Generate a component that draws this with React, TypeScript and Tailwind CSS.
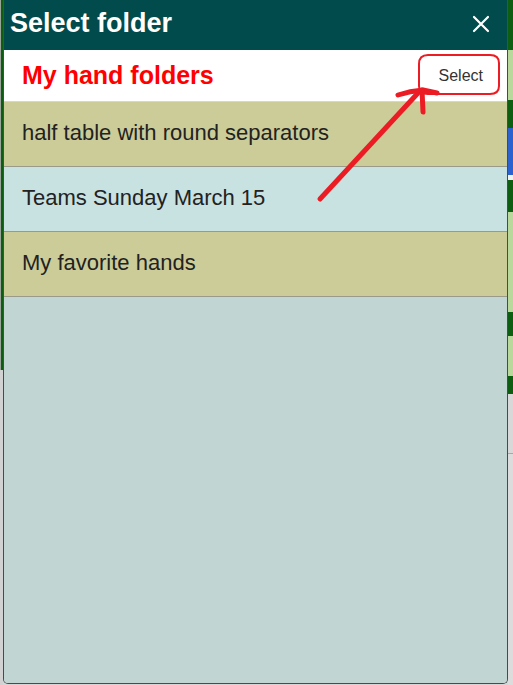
import React from "react";

const rows = [
  { label: "half table with round separators", bg: "bg-[#cccc99]" },
  { label: "Teams Sunday March 15", bg: "bg-[#c8e1e1]" },
  { label: "My favorite hands", bg: "bg-[#cccc99]" },
];

export default function App() {
  return (
    <div className="relative w-[513px] h-[685px] flex overflow-hidden bg-[#d6d6d6] font-['Liberation_Sans',Arial,sans-serif]">
      {/* left page strip */}
      <div className="w-[3px] flex flex-col">
        <div className="h-[370px] flex">
          <div className="w-[1px] bg-[#9aa59a]" />
          <div className="flex-1 bg-[#0e5e12]" />
        </div>
        <div className="flex-1 bg-[#d2d2d2]" />
      </div>

      {/* modal */}
      <div className="w-[505px] h-[684px] flex flex-col border-x border-b border-[#4a4a4a] rounded-b-[5px] overflow-hidden bg-[#c1d5d3]">
        <div className="h-[50px] bg-[#014b4c] flex items-center justify-between pl-[6px] pr-[17px] pb-[3px] shrink-0">
          <span className="text-white font-bold text-[27px]">Select folder</span>
          <svg width="18" height="18" viewBox="0 0 18 18" className="mt-[1px]">
            <path d="M2 2 L16 16 M16 2 L2 16" stroke="white" strokeWidth="2.2" strokeLinecap="round" />
          </svg>
        </div>
        <div className="h-[52px] bg-white border-b border-[#d6d6d6] flex items-center justify-between pl-[18px] pr-[24px] shrink-0">
          <span className="text-[#ff0000] font-bold text-[25px]">My hand folders</span>
          <span className="text-[#333333] text-[16px]">Select</span>
        </div>
        {rows.map((r) => (
          <div
            key={r.label}
            className={`h-[65px] ${r.bg} border-b border-[#9a9a8a] flex items-center pl-[18px] pb-[3px] shrink-0`}
          >
            <span className="text-[#222222] text-[22px]">{r.label}</span>
          </div>
        ))}
        <div className="flex-1 bg-[#c1d5d3]" />
      </div>

      {/* right page strip */}
      <div className="w-[5px] flex flex-col">
        <div className="h-[50px] bg-[#0e5e12]" />
        <div className="h-[50px] bg-[#b9d89c]" />
        <div className="h-[28px] bg-[#0e5e12]" />
        <div className="h-[47px] bg-[#2b62cf]" />
        <div className="h-[5px] bg-[#f2f2f2]" />
        <div className="h-[32px] bg-[#0e5e12]" />
        <div className="h-[100px] bg-[#b9d89c]" />
        <div className="h-[24px] bg-[#0e5e12]" />
        <div className="h-[40px] bg-[#b9d89c]" />
        <div className="h-[18px] bg-[#0e5e12]" />
        <div className="h-[60px] bg-[#d8d8d8] border-b border-[#a8a8a8]" />
        <div className="flex-1 bg-[#dcdcdc]" />
      </div>

      {/* red annotation overlay */}
      <svg className="absolute inset-0 pointer-events-none" width="513" height="685" viewBox="0 0 513 685">
        <path
          d="M428 55 Q419 55 419 64 L419 86 Q419 94 428 94 L490 94 Q499 94 499 86 L499 63 Q499 55 490 55 Z"
          fill="none"
          stroke="#ec1c24"
          strokeWidth="2"
          strokeLinejoin="round"
        />
        <path d="M320 199 L418 93" stroke="#ec1c24" strokeWidth="5" strokeLinecap="round" fill="none" />
        <path d="M398 95 Q410 91 423 90 L437 93" stroke="#ec1c24" strokeWidth="5" strokeLinecap="round" strokeLinejoin="round" fill="none" />
        <path d="M422 90 L423 112" stroke="#ec1c24" strokeWidth="5" strokeLinecap="round" fill="none" />
      </svg>
    </div>
  );
}
